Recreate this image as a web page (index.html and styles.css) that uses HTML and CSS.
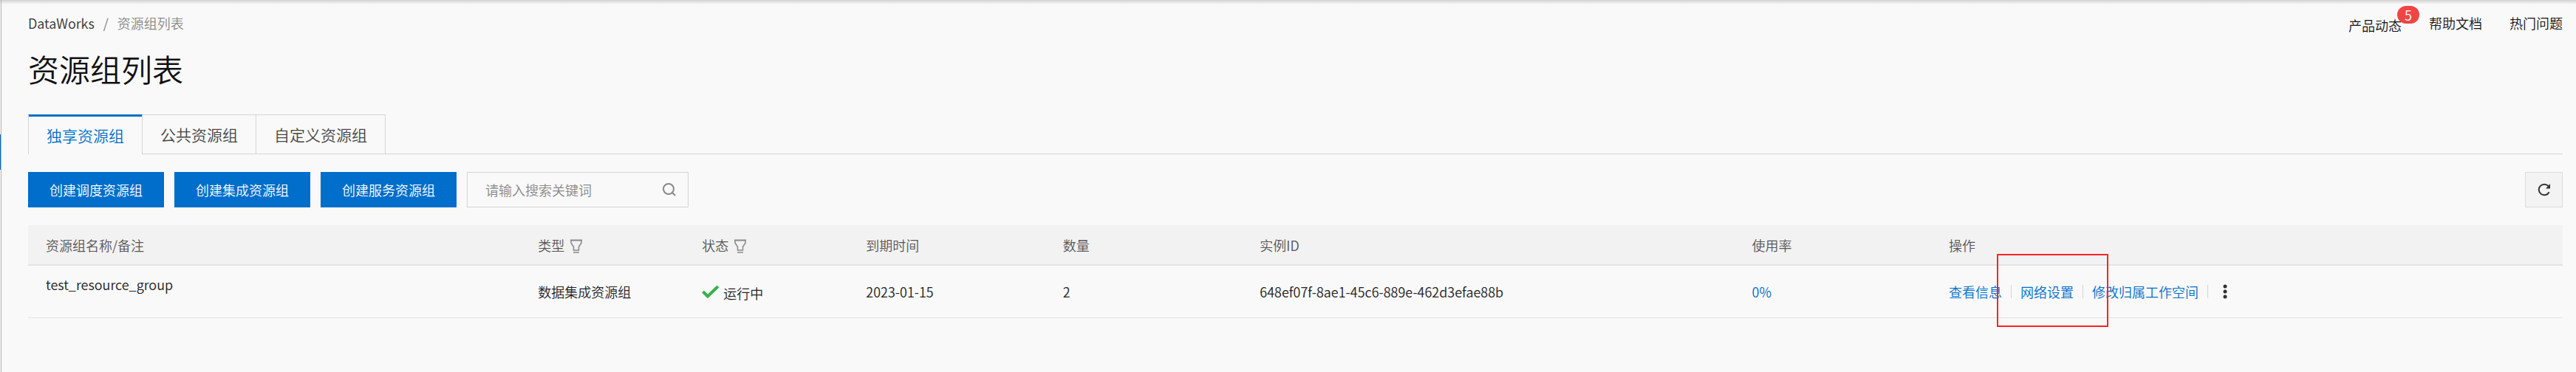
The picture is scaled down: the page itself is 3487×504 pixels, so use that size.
FILE: index.html
```html
<!DOCTYPE html>
<html lang="zh-CN">
<head>
    <meta charset="UTF-8">
    <meta name="viewport" content="width=device-width, initial-scale=1.0">
    <title>资源组列表</title>
    <link rel="stylesheet" href="styles.css">
</head>
<body>
    <aside class="side">
        <div class="side-handle"></div>
    </aside>

    <main class="main">
        <header class="topbar">
            <nav class="breadcrumb">
                <a href="#">DataWorks</a>
                <span class="slash">/</span>
                <span class="current">资源组列表</span>
            </nav>
            <nav class="help">
                <a href="#" class="news">产品动态<span class="badge">5</span></a>
                <a href="#">帮助文档</a>
                <a href="#">热门问题</a>
            </nav>
        </header>

        <h1>资源组列表</h1>

        <div class="tabs" role="tablist">
            <button class="tab active" role="tab" aria-selected="true">独享资源组</button>
            <button class="tab" role="tab">公共资源组</button>
            <button class="tab" role="tab">自定义资源组</button>
        </div>

        <div class="toolbar">
            <button class="btn">创建调度资源组</button>
            <button class="btn">创建集成资源组</button>
            <button class="btn">创建服务资源组</button>
            <label class="search">
                <input type="text" placeholder="请输入搜索关键词" aria-label="搜索关键词">
                <svg width="18" height="18" viewBox="0 0 18 18" fill="none" stroke="#888" stroke-width="2">
                    <circle cx="8" cy="8" r="7"/>
                    <path d="M13 13l4 4"/>
                </svg>
            </label>
            <button class="refresh" aria-label="刷新">
                <svg width="18" height="18" viewBox="0 0 18 18" fill="none">
                    <path d="M15.6 12.2A7.3 7.3 0 1 1 14.6 4.2" stroke="#333" stroke-width="2"/>
                    <path d="M17 1v6.5h-6z" fill="#333"/>
                </svg>
            </button>
        </div>

        <table class="list">
            <colgroup>
                <col class="w-name">
                <col class="w-type">
                <col class="w-status">
                <col class="w-date">
                <col class="w-count">
                <col class="w-id">
                <col class="w-usage">
                <col class="w-action">
            </colgroup>
            <thead>
                <tr>
                    <th>资源组名称/备注</th>
                    <th>
                        <div class="cell">类型
                            <svg class="filter" width="16" height="19" viewBox="0 0 16 19" fill="none" stroke="#888">
                                <path d="M0 1.5h16" stroke-width="2"/>
                                <path d="M1 2v3l3.5 5.5v4.5h7v-4.5L15 5V2" stroke-width="1.5"/>
                                <path d="M4 18h8" stroke-width="1.5"/>
                            </svg>
                        </div>
                    </th>
                    <th>
                        <div class="cell">状态
                            <svg class="filter" width="16" height="19" viewBox="0 0 16 19" fill="none" stroke="#888">
                                <path d="M0 1.5h16" stroke-width="2"/>
                                <path d="M1 2v3l3.5 5.5v4.5h7v-4.5L15 5V2" stroke-width="1.5"/>
                                <path d="M4 18h8" stroke-width="1.5"/>
                            </svg>
                        </div>
                    </th>
                    <th>到期时间</th>
                    <th>数量</th>
                    <th>实例ID</th>
                    <th>使用率</th>
                    <th>操作</th>
                </tr>
            </thead>
            <tbody>
                <tr>
                    <td class="name">test_resource_group</td>
                    <td>数据集成资源组</td>
                    <td>
                        <div class="cell status">
                            <svg width="24" height="18" viewBox="0 0 24 18" fill="none">
                                <path d="M1.5 9l6.5 6.5L22 2" stroke="#35b34a" stroke-width="4"/>
                            </svg>
                            <span>运行中</span>
                        </div>
                    </td>
                    <td>2023-01-15</td>
                    <td>2</td>
                    <td>648ef07f-8ae1-45c6-889e-462d3efae88b</td>
                    <td><a href="#">0%</a></td>
                    <td>
                        <div class="cell actions">
                            <a href="#">查看信息</a>
                            <i class="sep"></i>
                            <a href="#" class="marked">网络设置</a>
                            <i class="sep"></i>
                            <a href="#">修改归属工作空间</a>
                            <i class="sep"></i>
                            <button class="more" aria-label="更多">
                                <svg width="6" height="20" viewBox="0 0 6 20" fill="#333">
                                    <circle cx="3" cy="3" r="2.5"/>
                                    <circle cx="3" cy="10" r="2.5"/>
                                    <circle cx="3" cy="17" r="2.5"/>
                                </svg>
                            </button>
                        </div>
                    </td>
                </tr>
            </tbody>
        </table>
    </main>
</body>
</html>
```

FILE: styles.css
```css
*, *::after {
    box-sizing: border-box;
}
body {
    margin: 0;
    min-height: 100vh;
    display: flex;
    background: linear-gradient(#d2d2d2, #f9f9f9 6px);
    color: #222;
    font-family: "Noto Sans CJK SC", sans-serif;
    font-size: 18px;
    font-weight: 350;
    line-height: 26px;
}
a {
    color: #006eca;
    text-decoration: none;
}
button, input {
    font: inherit;
}
button {
    cursor: pointer;
}

.side {
    width: 1px;
    padding-top: 182px;
}
.side-handle {
    height: 48px;
    background: #006eca;
}
.main {
    flex: 1;
    min-width: 0;
    padding: 18px 18px 0 36px;
    border-left: 1px solid #b4b4b4;
}

/* 顶部 */
.topbar {
    display: flex;
    justify-content: space-between;
}
.breadcrumb {
    display: flex;
    gap: 12px;
}
.breadcrumb a {
    color: #333;
}
.slash {
    color: #777;
}
.current {
    color: #888;
}
.help {
    display: flex;
    gap: 37px;
}
.help a {
    color: #111;
}
.help .news {
    position: relative;
    padding-top: 3px;
}
.badge {
    position: absolute;
    top: -10px;
    left: 66px;
    width: 30px;
    height: 24px;
    border-radius: 12px;
    background: #f04545;
    color: #fff;
    line-height: 24px;
    text-align: center;
}
h1 {
    margin: 16px 0 32px;
    color: #111;
    font-size: 42px;
    font-weight: 350;
    line-height: 60px;
}

/* 标签页 */
.tabs {
    display: flex;
    border-bottom: 1px solid #d5d5d5;
}
.tab {
    height: 53px;
    padding: 0 24px;
    border: 1px solid #d5d5d5;
    border-width: 1px 1px 0 0;
    background: none;
    color: #444;
    font-size: 21px;
}
.tab.active {
    height: 54px;
    margin-bottom: -1px;
    border-left-width: 1px;
    background: #f9f9f9;
    box-shadow: inset 0 2px #006eca;
    border-top-color: #006eca;
    color: #006eca;
}

/* 工具栏 */
.toolbar {
    display: flex;
    gap: 14px;
    margin: 24px 0;
}
.btn {
    height: 48px;
    padding: 0 28px;
    border: 1px solid #006eca;
    background: #006eca;
    color: #fff;
}
.search {
    display: flex;
    align-items: center;
    width: 300px;
    height: 48px;
    padding: 0 16px 0 24px;
    border: 1px solid #d5d5d5;
}
.search input {
    flex: 1;
    min-width: 0;
    padding: 0;
    border: 0;
    outline: 0;
    background: none;
    color: #333;
}
.search input::placeholder {
    color: #888;
}
.refresh {
    display: flex;
    align-items: center;
    justify-content: center;
    width: 51px;
    height: 48px;
    margin-left: auto;
    border: 1px solid #dcdcdc;
    background: #f3f3f3;
}

/* 列表 */
.list {
    width: 100%;
    table-layout: fixed;
    border-collapse: separate;
    border-spacing: 0;
}
.w-name, .w-id { width: 300px; }
.w-type, .w-status { width: 100px; }
.w-date, .w-count, .w-usage { width: 120px; }
.w-action { width: 385px; }
.list th {
    height: 55px;
    padding: 0 24px;
    border-bottom: 2px solid #e3e3e3;
    background: #f2f2f2;
    color: #555;
    font-weight: 350;
    text-align: left;
}
.list td {
    height: 71px;
    padding: 0 24px;
    border-bottom: 1px solid #e3e3e3;
}
.list .name {
    padding-bottom: 20px;
}
.cell {
    display: flex;
    align-items: center;
    gap: 8px;
    white-space: nowrap;
}
.filter {
    margin-top: 4px;
}
.status {
    gap: 5px;
}
.status span {
    padding-top: 4px;
}
.actions {
    gap: 12px;
}
.sep {
    width: 1px;
    height: 18px;
    background: #d5d5d5;
}
.more {
    display: flex;
    padding: 0 8px;
    border: 0;
    background: none;
}
.marked {
    position: relative;
}
/* 红框标出网络设置 */
.marked::after {
    content: "";
    position: absolute;
    top: -38px;
    left: -32px;
    width: 151px;
    height: 99px;
    border: 2px solid #f22;
}
```
